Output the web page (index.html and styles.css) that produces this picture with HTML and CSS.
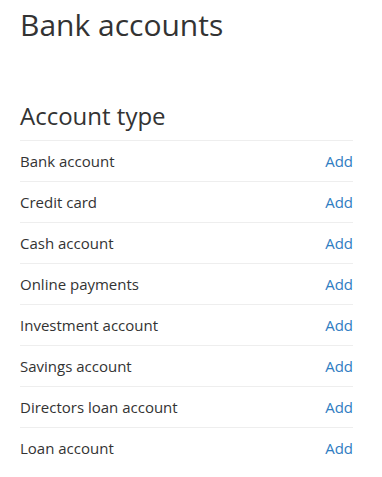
FILE: index.html
```html
<!DOCTYPE html>
<html lang="en">
<head>
<meta charset="utf-8">
<title>Bank accounts</title>
<link rel="stylesheet" href="styles.css">
</head>
<body>
<main class="page">
  <h1 class="title">Bank accounts</h1>
  <section class="types">
    <h2 class="subtitle">Account type</h2>
    <ul class="list">
      <li class="row"><span class="name">Bank account</span><a class="add" href="#">Add</a></li>
      <li class="row"><span class="name">Credit card</span><a class="add" href="#">Add</a></li>
      <li class="row"><span class="name">Cash account</span><a class="add" href="#">Add</a></li>
      <li class="row"><span class="name">Online payments</span><a class="add" href="#">Add</a></li>
      <li class="row"><span class="name">Investment account</span><a class="add" href="#">Add</a></li>
      <li class="row"><span class="name">Savings account</span><a class="add" href="#">Add</a></li>
      <li class="row"><span class="name">Directors loan account</span><a class="add" href="#">Add</a></li>
      <li class="row"><span class="name">Loan account</span><a class="add" href="#">Add</a></li>
    </ul>
  </section>
</main>
</body>
</html>
```

FILE: styles.css
```css
html, body {
  margin: 0;
  padding: 0;
  background: #ffffff;
}
body {
  font-family: "Open Sans", "Liberation Sans", sans-serif;
  color: #333333;
}
.page {
  width: 333px;
  padding: 0 0 0 20px;
}
.title {
  margin: 0;
  padding-top: 6px;
  font-size: 30px;
  font-weight: 400;
  line-height: 38px;
  color: #333333;
}
.types {
  margin-top: 56px;
}
.subtitle {
  margin: 0;
  font-size: 24px;
  font-weight: 400;
  line-height: 32px;
  padding-bottom: 8px;
  color: #333333;
}
.list {
  list-style: none;
  margin: 0;
  padding: 0;
}
.row {
  display: flex;
  justify-content: space-between;
  align-items: center;
  border-top: 1px solid #eeeeee;
  padding: 10px 0;
  font-size: 15px;
  line-height: 20px;
}
.name {
  color: #333333;
}
.add {
  color: #2f7dc2;
  text-decoration: none;
}
```
